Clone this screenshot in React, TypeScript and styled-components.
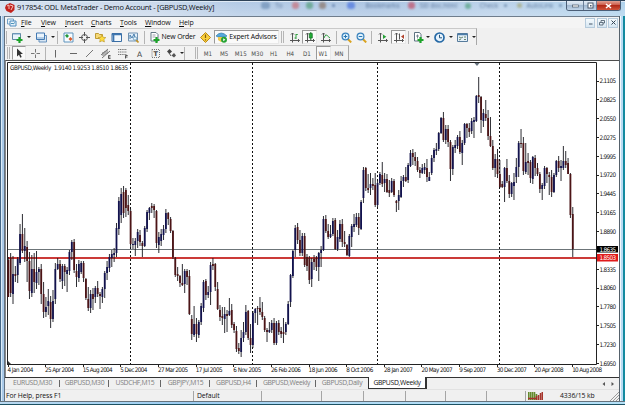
import React from 'react';
import styled, { createGlobalStyle, css } from 'styled-components';

const Global = createGlobalStyle`
  * { box-sizing: border-box; }
  html, body { margin: 0; padding: 0; overflow: hidden; }
`;

const ui = `'Open Sans', 'Noto Sans', sans-serif`;
const tahoma = `'DejaVu Sans Condensed', 'DejaVu Sans', sans-serif`;

const Win = styled.div`
  width: 625px;
  height: 405px;
  display: flex;
  flex-direction: column;
  padding: 0 6px 0 5px;
  font-family: ${ui};
  color: #111;
  background:
    linear-gradient(90deg, #456786 0 1px, #dcecf8 1px 2px, #a9c9e8 2px 4px, #617181 4px 5px, transparent 5px 619px, #55616b 619px 620px, #f2f8fc 620px 621px, #b9dbf3 621px 623px, #148aa0 623px 625px),
    linear-gradient(90deg, #c9daec 0, #bdd5ec 30%, #9fc6ea 60%, #a9cdea 100%);
`;

const TitleBar = styled.div`
  height: 16px;
  flex: none;
  display: flex;
  margin: 0 -6px 0 -5px;
  padding: 0 4px 0 5px;
  border-top: 1px solid #2e4358;
  box-shadow: inset 0 1px 0 #dfeaf5;
  background:
    linear-gradient(180deg, rgba(255,255,255,.1), rgba(255,255,255,.3)),
    linear-gradient(90deg, #cfdcec 0, #c3d4e9 25%, #aac4e2 38%, #a3bfe0 60%, #b2cce7 80%, #a6cdea 100%);
`;
const TitleText = styled.div`
  width: 200px;
  flex: none;
  margin-left: 2px;
  font-size: 7.4px;
  line-height: 13px;
  letter-spacing: -0.24px;
  white-space: nowrap;
  color: #0b0f16;
`;
const Glass = styled.div`
  flex: 1;
  min-width: 0;
  height: 12px;
  display: flex;
  align-items: flex-start;
  padding: 0 0 0 43px;
  font-size: 6.5px;
  line-height: 8px;
  color: #2c4a74;
  opacity: 0.65;
  filter: blur(1px);
  overflow: hidden;
  white-space: nowrap;
`;
const Slot = styled.div<{ $w: number }>`
  width: ${p => p.$w}px;
  height: 9px;
  flex: none;
  display: flex;
  align-items: center;
  justify-content: center;
`;
const Blob = styled.i<{ $c: string; $w?: number }>`
  width: ${p => p.$w ?? 7}px;
  height: ${p => Math.min(p.$w ?? 7, 7)}px;
  border-radius: 3px;
  background: ${p => p.$c};
`;
const Caption = styled.div`
  display: flex;
  flex: none;
  height: 10px;
  border: 1px solid #4b5f78;
  border-top: 0;
  border-radius: 0 0 3px 3px;
  overflow: hidden;
`;
const CapBtn = styled.div<{ $w: number; $close?: boolean }>`
  width: ${p => p.$w}px;
  display: flex;
  align-items: center;
  justify-content: center;
  border-right: ${p => (p.$close ? 0 : '1px solid #6b7f98')};
  background: ${p => p.$close
    ? 'linear-gradient(#e0a295, #cc5a48 45%, #b02a18 50%, #d0523a)'
    : 'linear-gradient(#e4edf6, #c3d4e6 45%, #a1b9d2 50%, #c0d4e8)'};
`;

const MenuBar = styled.div`
  height: 12px;
  flex: none;
  display: flex;
  align-items: center;
  background: #f4f4f4;
  border-top: 1px solid #6f7d8c;
  padding: 0 0 0 2px;
`;
const MenuItem = styled.div<{ $w: number }>`
  width: ${p => p.$w}px;
  font-size: 7px;
  line-height: 9px;
  letter-spacing: -0.15px;
  color: #111;
  &::first-letter { text-decoration: underline; text-decoration-thickness: 0.5px; }
`;
const Mdi = styled.div`
  display: flex;
  gap: 1.5px;
  margin-left: auto;
  padding-right: 1px;
`;
const MdiBtn = styled.div`
  width: 10px;
  height: 10px;
  display: flex;
  align-items: center;
  justify-content: center;
  background: linear-gradient(#f5fafd, #d6e6f2);
  border: 1px solid #b5cadb;
`;

const Bar = styled.div<{ $h: number }>`
  height: ${p => p.$h}px;
  flex: none;
  display: flex;
  background: #f0f0f0;
`;
const Strip = styled.div<{ $w: number }>`
  width: ${p => p.$w}px;
  display: flex;
  align-items: center;
  overflow: hidden;
  border-top: 1px solid #c9c9c9;
  border-right: 1px solid #a8a8a8;
  background: #f2f2f2;
`;
const Cell = styled.div<{ $w: number; $on?: boolean }>`
  width: ${p => p.$w}px;
  height: 14px;
  flex: none;
  display: flex;
  align-items: center;
  justify-content: center;
  ${p => p.$on && css`
    background: #fafafa;
    border: 1px solid;
    border-color: #9a9a9a #e8e8e8 #e8e8e8 #9a9a9a;
  `}
`;
const Sep = styled.div<{ $m?: number }>`
  width: 1px;
  height: 13px;
  flex: none;
  background: #b4b4b4;
  margin: 0 ${p => p.$m ?? 0}px;
`;
const Grip = styled.div`
  width: 3px;
  height: 12px;
  flex: none;
  margin: 0 2px;
  border-left: 1px solid #b5b5b5;
  border-right: 1px solid #b5b5b5;
`;
const Label = styled.span`
  font-size: 6.9px;
  line-height: 10px;
  margin-left: 2px;
  letter-spacing: -0.16px;
  white-space: nowrap;
  color: #080808;
`;
const Period = styled(Cell)`
  font-size: 6.2px;
  font-family: ${tahoma};
  color: #4a4a4a;
`;
const Caret = styled.i`
  border: 2px solid transparent;
  border-top: 2.5px solid #222;
  border-bottom: 0;
`;

const ChartArea = styled.div`
  height: 317px;
  flex: none;
  background: #fff;
  border-top: 1px solid #4e4e4e;
  border-left: 1px solid #8a8a8a;
`;
const TabRow = styled.div`
  height: 12px;
  flex: none;
  display: flex;
  background: #f0f0f0;
  border-top: 1px solid #333;
  font-size: 6.8px;
  line-height: 10px;
  color: #808080;
`;
const Tab = styled.div<{ $w: number; $active?: boolean }>`
  width: ${p => p.$w}px;
  flex: none;
  display: flex;
  justify-content: center;
  position: relative;
  white-space: nowrap;
  letter-spacing: -0.32px;
  ${p => p.$active ? css`
    margin-top: -1px;
    height: 12px;
    line-height: 12px;
    background: #fff;
    color: #111;
    border: 1px solid #333;
    border-top: 0;
    border-right-width: 2px;
  ` : css`
    &::after {
      content: '';
      position: absolute;
      right: 0;
      top: 2px;
      height: 7px;
      border-right: 1px solid #666;
    }
    &:nth-last-child(3)::after { border: 0; }
  `}
`;
const Arrows = styled.div`
  margin-left: auto;
  display: flex;
  align-items: center;
  padding-right: 4px;
`;
const Status = styled.div`
  height: 12px;
  flex: none;
  display: flex;
  align-items: center;
  background: #f0f0f0;
  border-top: 1px solid #e2e2e2;
  font-size: 6.8px;
  line-height: 10px;
  letter-spacing: -0.08px;
  color: #111;
`;
const Pane = styled.div<{ $w: number; $pad?: number; $last?: boolean }>`
  width: ${p => p.$w}px;
  height: 10px;
  padding-left: ${p => p.$pad ?? 1}px;
  display: flex;
  align-items: center;
  gap: 17px;
  white-space: nowrap;
  border-right: ${p => (p.$last ? 0 : '1px solid #a5a5a5')};
`;
const Foot = styled.div`
  flex: 1;
  margin: 0 -6px 0 -5px;
  border-top: 1px solid #66727c;
  border-bottom: 1px solid #1d5263;
  background: linear-gradient(90deg, #b9d8f0, #a6d3f2 20%, #9ccbf0 30%, #b1dbf5 50%, #b4e0f7);
`;

/* [high, body top, body bottom, low, direction] per week, vertical pixels; 1 = up, 0 = down */
type Candle = [number, number, number, number, number];
const candles: Candle[] = [
  [257,260,297,297,0],[253,258,293,297,0],[256,274,294,304,1],[266,274,276,282,0],[257,259,275,283,1],[224,234,263,265,1],
  [214,234,251,253,0],[228,246,251,262,1],[241,247,261,282,0],[252,261,291,299,0],[255,269,293,297,1],[253,269,282,293,0],
  [251,272,283,289,1],[267,269,272,285,1],[264,269,294,304,0],[282,294,312,318,0],[297,307,312,317,1],[289,301,306,315,1],
  [296,302,319,328,0],[290,301,319,322,1],[263,269,299,304,1],[258,264,269,270,1],[260,264,279,282,0],[264,266,281,289,1],
  [264,266,272,286,0],[267,270,274,292,1],[250,252,271,275,1],[240,242,252,260,1],[239,242,270,273,0],[264,271,277,287,0],
  [260,264,278,282,1],[261,263,272,274,1],[261,263,278,282,0],[278,279,298,300,0],[287,299,308,311,0],[290,294,308,313,1],
  [288,294,299,310,0],[286,288,297,303,1],[281,288,294,297,0],[292,294,296,309,0],[287,289,297,303,1],[271,273,289,298,1],
  [261,267,273,280,1],[254,257,268,272,1],[250,254,258,267,1],[248,253,255,262,1],[223,228,253,257,1],[197,201,229,235,1],
  [188,194,215,223,1],[186,192,213,218,0],[188,190,208,217,0],[195,205,211,215,0],[209,211,244,249,0],[238,244,245,249,1],
  [238,241,245,256,1],[229,232,241,248,1],[230,235,242,246,0],[241,243,246,257,0],[226,228,246,247,1],[210,212,229,232,1],
  [207,208,213,220,1],[203,206,208,213,0],[204,206,210,218,0],[210,211,243,248,0],[232,237,245,253,1],[229,234,241,246,1],
  [225,229,235,240,1],[209,213,229,233,1],[212,213,219,225,0],[217,219,231,233,0],[230,231,257,259,0],[257,258,275,277,0],
  [267,274,276,281,0],[275,276,283,287,0],[264,283,285,286,0],[269,271,284,293,1],[269,271,277,285,0],[270,276,314,315,0],
  [315,319,334,340,0],[306,324,335,337,1],[318,324,334,342,0],[320,322,335,338,1],[303,306,322,325,1],[280,282,308,312,1],
  [279,281,295,300,0],[286,292,295,298,1],[262,265,292,305,1],[258,264,266,270,0],[263,264,287,291,0],[282,289,309,310,0],
  [305,310,317,321,0],[307,316,318,325,0],[307,314,319,333,1],[310,314,316,332,0],[298,311,315,316,1],[304,310,325,328,0],
  [322,324,330,333,0],[326,331,349,352,0],[343,348,351,354,0],[330,338,352,357,1],[322,332,338,342,1],[305,312,332,335,1],
  [310,311,338,340,0],[324,338,345,353,0],[311,313,345,348,1],[308,309,313,323,1],[306,308,309,325,0],[297,308,312,315,0],
  [302,312,317,320,0],[316,318,330,332,0],[328,330,332,342,0],[322,330,332,333,1],[320,323,330,333,1],[318,323,343,345,0],
  [321,323,343,345,1],[320,323,332,335,0],[327,331,334,338,0],[318,332,334,343,0],[322,324,332,335,1],[301,304,324,325,1],
  [274,275,302,307,1],[250,251,276,278,1],[225,228,250,257,1],[223,227,240,244,0],[230,240,253,256,0],[233,236,253,256,1],
  [233,236,265,267,0],[254,257,266,271,0],[256,258,280,284,0],[258,262,279,287,1],[255,259,262,270,0],[256,258,267,271,0],
  [252,253,267,281,1],[246,250,253,267,1],[216,219,250,251,1],[215,219,231,233,0],[224,231,237,239,0],[225,234,237,238,1],
  [218,221,234,236,1],[218,220,249,250,0],[230,237,249,251,1],[220,224,239,242,1],[219,224,242,247,0],[231,242,244,247,0],
  [244,245,255,256,0],[234,236,256,257,1],[224,226,237,247,1],[214,224,227,232,1],[213,217,225,227,1],[213,217,228,235,0],
  [200,202,229,230,1],[167,170,198,203,1],[167,168,188,191,0],[174,188,190,193,0],[173,184,188,195,1],[178,184,186,190,0],
  [173,185,205,207,0],[180,183,205,207,1],[172,174,183,185,1],[162,175,184,187,0],[173,179,183,192,1],[174,179,192,193,0],
  [180,190,193,197,0],[178,181,192,193,1],[179,181,195,197,0],[200,201,203,212,0],[190,195,201,210,1],[176,181,197,198,1],
  [175,177,181,187,1],[167,177,181,182,0],[163,165,180,183,1],[150,153,166,167,1],[149,153,157,165,0],[152,157,161,166,0],
  [157,161,170,172,0],[167,170,173,178,0],[164,168,173,174,1],[163,167,170,174,1],[159,168,177,182,0],[172,177,181,181,1],
  [155,158,173,175,1],[148,150,158,162,1],[143,149,151,155,1],[132,133,149,151,1],[117,118,133,134,1],[112,118,140,142,0],
  [125,129,140,144,1],[125,129,142,147,0],[140,142,169,181,0],[145,147,169,175,1],[140,145,148,153,1],[135,137,146,149,1],
  [131,137,152,154,0],[140,143,153,165,1],[123,124,143,145,1],[123,124,128,138,0],[123,128,132,137,0],[118,121,131,134,1],
  [117,120,122,138,1],[95,96,121,122,1],[77,95,97,103,0],[96,97,120,133,0],[109,113,121,127,1],[100,114,118,121,0],
  [110,118,136,140,0],[117,136,146,147,0],[140,146,168,170,0],[154,159,168,177,1],[149,159,174,178,0],[160,174,187,188,0],
  [181,184,187,188,0],[167,168,187,202,1],[159,168,181,183,0],[175,181,194,198,0],[182,183,194,197,1],[173,182,186,200,1],
  [158,167,177,183,1],[141,143,167,177,1],[129,143,144,148,0],[137,143,171,175,0],[143,162,172,174,1],[153,161,163,175,0],
  [160,162,178,183,0],[156,157,179,184,1],[155,158,168,176,0],[163,168,174,176,0],[172,174,189,193,0],[183,185,189,200,1],
  [166,168,186,189,1],[167,168,174,183,0],[172,175,177,195,0],[170,177,192,197,0],[173,175,192,193,1],[160,161,175,177,1],
  [156,161,168,172,0],[160,166,168,181,1],[146,161,168,170,1],[151,161,165,168,0],[158,163,174,174,0],[173,174,215,218,0],
  [207,214,249,257,0],
];
const STEP = 2.352;

const prices = ['2.1105','2.0825','2.0550','2.0275','1.9995','1.9720','1.9445','1.9165','1.8890','','1.8335','1.8060','1.7780','1.7505','1.7230','1.6950'];
const dates: [string, number][] = [
  ['4 Jan 2004',27],['25 Apr 2004',30],['15 Aug 2004',31],['5 Dec 2004',28],['27 Mar 2005',31],['17 Jul 2005',28],['6 Nov 2005',29],
  ['26 Feb 2006',31],['18 Jun 2006',30],['8 Oct 2006',28],['28 Jan 2007',30],['20 May 2007',32],['9 Sep 2007',28],['30 Dec 2007',31],
  ['20 Apr 2008',30],['10 Aug 2008',31],
];

const ChartText = styled.text<{ $light?: boolean }>`
  font-family: ${tahoma};
  font-size: 6.3px;
  fill: ${p => (p.$light ? '#fff' : '#111')};
`;
const Plot = styled.svg`
  display: block;
`;

const Chart = () => (
  <Plot width="613" height="316" viewBox="6 61 613 316">
    <path d="M7.5 365V62.5H596.5V364.5H7" fill="none" stroke="#222" />
    <path d="M8 361l3 3h-3z" fill="#333" />
    <path d="M130.5 63V364M252.5 63V364M377.5 63V364M499.5 63V364" stroke="#111" strokeDasharray="2 2" />
    <path d="M8 249.5H596" stroke="#6c7478" />
    <path d="M8 258H596" stroke="#cb3a38" strokeWidth="1.8" />
    {candles.map(([h, t, b, l, up], i) => {
      const x = 8 + i * STEP;
      return (
        <g key={i}>
          <path d={`M${x + 0.3} ${h}V${l}`} stroke="#15151c" strokeWidth="0.9" />
          <rect x={x - 0.6} y={t} width="1.8" height={Math.max(1, b - t)} fill={up ? '#12124e' : '#4c1416'} />
        </g>
      );
    })}
    <path d="M474.5 63h5l-2.5 3z" fill="#63707c" />
    <ChartText x="10" y="69.6" textLength="118">GBPUSD,Weekly{'\u00a0\u00a0'}1.9140 1.9253 1.8510 1.8635</ChartText>
    {prices.map((p, i) => p && (
      <g key={p}>
        <path d={`M597 ${Math.round(80.5 + i * 18.83) + 0.5}h2`} stroke="#222" />
        <ChartText x="599.5" y={83.2 + i * 18.83} textLength="16.5">{p}</ChartText>
      </g>
    ))}
    <rect x="597" y="246" width="21" height="6.5" fill="#000" />
    <ChartText $light x="599.5" y="251.6" textLength="16.5">1.8635</ChartText>
    <rect x="597" y="254" width="21" height="7.5" fill="#e01a1a" />
    <ChartText $light x="599.5" y="260.2" textLength="16.5">1.8503</ChartText>
    {dates.map(([d, w], i) => (
      <g key={d}>
        <path d={`M${Math.round(7.5 + i * 37.63) + 0.5} 365v2`} stroke="#222" />
        <ChartText x={7.4 + i * 37.65} y="372.2" textLength={w - 1}>{d}</ChartText>
      </g>
    ))}
  </Plot>
);

type IconKind =
  | 'newchart' | 'profiles' | 'market' | 'cross' | 'nav' | 'terminal' | 'tester' | 'order' | 'meta' | 'expert'
  | 'bars' | 'candle' | 'line' | 'zin' | 'zout' | 'scroll' | 'shift' | 'indic' | 'clock' | 'template'
  | 'cursor' | 'plus' | 'vline' | 'hline' | 'trend' | 'channel' | 'fib' | 'a' | 't' | 'arrows';

const axes = <path d="M3.5 1v9.500M1 8.500h9.500M2 2.500l1.500-1.500 1.500 1.500M9 7l1.500 1.500L9 10" stroke="#555" fill="none" />;
const greenPlus = <path d="M7.500 5v6M4.500 8h6" stroke="#1da32a" strokeWidth="2.200" />;
const lens = <>
  <path d="M6.800 7l3.400 3.400" stroke="#d9a21f" strokeWidth="2" />
  <circle cx="4.500" cy="4.500" r="3.400" fill="#dff1fc" stroke="#3b83bd" strokeWidth="1.200" />
</>;

const art: Record<IconKind, React.ReactNode> = {
  newchart: <><path d="M.5 1.500h8v6h-8z" fill="#e9f3fb" stroke="#6188a4" /><path d="M1 2h7" stroke="#7aa6cc" />{greenPlus}</>,
  profiles: <><path d="M3 3.500h7.500V10H3z" fill="#d8e6f3" stroke="#6992bd" /><path d="M.5 1h8v6.500h-8z" fill="#eaf4fc" stroke="#4379b3" /><path d="M1 6h7" stroke="#7ba5cf" /></>,
  market: <><path d="M1 1h9v9H1z" fill="#f7fcff" stroke="#5d93bd" /><path d="M2 3.500l2-1.500 2 2-2 2z" fill="#24983a" /><path d="M5.500 7l2-2 2 2-2 2z" fill="#da5b2a" /></>,
  cross: <><circle cx="5.500" cy="5.500" r="3" fill="none" stroke="#555" /><path d="M5.500 0v4M5.500 7v4M0 5.500h4M7 5.500h4" stroke="#555" /></>,
  nav: <><path d="M.5 1.500h3l1 1h3v4h-7z" fill="#f5d877" stroke="#bd9b35" /><path d="M7 3l1.200 2.300 2.600.3-1.900 1.800.5 2.600L7 8.800 4.700 10l.5-2.600-2-1.800 2.700-.3z" fill="#ffdc3f" stroke="#b39120" strokeWidth=".6" /></>,
  terminal: <><path d="M1 1.500h9.500v8H1z" fill="#f2f8fd" stroke="#3a6ea5" /><path d="M1 2.500h9.500M2.500 3v6" stroke="#3e76b0" strokeWidth="1.700" /></>,
  tester: <><path d="M.5 1h9v8h-9z" fill="#e2effa" stroke="#7293b2" /><path d="M2 7V3l2 3 2-4 1 4" stroke="#487eae" fill="none" /><path d="M8 8l2.500 2.500" stroke="#c49428" strokeWidth="1.600" /><circle cx="7" cy="6.500" r="1.700" fill="#e8f6fd" stroke="#4a82aa" strokeWidth=".7" /></>,
  order: <><path d="M2 .5h5l2 2V9H2z" fill="#fff" stroke="#657884" /><path d="M3.500 3h3M3.500 5h3" stroke="#778" strokeWidth=".7" />{greenPlus}</>,
  meta: <><path d="M5.500.5l5 5-5 5-5-5z" fill="#f8cf3d" stroke="#bd8a17" /><path d="M5.500 2.500v3.500M5.500 7.300v1.200" stroke="#855d0d" strokeWidth="1.200" /></>,
  expert: <><path d="M0 4Q5-2 11 4L9 5H2z" fill="#57a9dc" stroke="#367ba8" strokeWidth=".7" /><path d="M2 5h7v2L5 10 2 8z" fill="#f0c84e" /><circle cx="8" cy="7.800" r="3" fill="#27a334" /><path d="M7.200 6.300l2.200 1.500-2.200 1.500z" fill="#fff" /></>,
  bars: <>{axes}<path d="M7 2v5M5.500 6H7M7 2.500h1.800" stroke="#30a040" fill="none" /></>,
  candle: <>{axes}<path d="M6.800 0v8" stroke="#187a28" /><path d="M5.300 1.500h3v4.500h-3z" fill="#1fae35" stroke="#176e25" strokeWidth=".7" /></>,
  line: <>{axes}<path d="M4 6Q6 1 7.500 4L10 6" stroke="#35a047" fill="none" /></>,
  zin: <>{lens}<path d="M2.700 4.500h3.600M4.500 2.700v3.600" stroke="#2877b3" /></>,
  zout: <>{lens}<path d="M2.700 4.500h3.600" stroke="#2877b3" /></>,
  scroll: <>{axes}<path d="M6 2.500l3.300 2.300L6 7z" fill="#25a036" /></>,
  shift: <>{axes}<path d="M6.500 1.500v6" stroke="#555" /><path d="M11 2.500L8 4.600 11 7z" fill="#b2432d" /></>,
  indic: <><path d="M1.500.5h5l1.500 2V9H1.500z" fill="#fff" stroke="#5c7280" /><path d="M4.500 2.500v4M3 4h3" stroke="#567" strokeWidth=".7" />{greenPlus}</>,
  clock: <><circle cx="5.500" cy="5.500" r="4.500" fill="#e7f3fd" stroke="#2468a5" strokeWidth="1.700" /><path d="M5.500 2.800v3H8" stroke="#245781" fill="none" /></>,
  template: <><path d="M.5 1.500h10v8H.5z" fill="#e6f1f9" stroke="#567b9c" /><path d="M1 2.500h9" stroke="#4b7ca8" strokeWidth="1.500" /><path d="M2 5l2 1 2-1M2 8l2-1M7 5h2M7 7.500h2" stroke="#69866f" fill="none" /></>,
  cursor: <path d="M3 .5v8l2-1.800 1.300 3 1.400-.7L6.400 6H9z" fill="#333" />,
  plus: <path d="M5.500 1v3.500M5.500 6.500V10M1 5.500h3.500M6.500 5.500H10" stroke="#777" />,
  vline: <path d="M5.500 2v7.500" stroke="#666" />,
  hline: <path d="M2 5.500h7" stroke="#666" />,
  trend: <path d="M2 9l7-7" stroke="#777" />,
  channel: <><path d="M1 7l7-6M2 10l8-7M3 4v4M5 3v4M7 2v4" stroke="#666" strokeWidth=".9" /><path d="M10.500 7.500H8.500v3h2M8.500 9h2" stroke="#333" strokeWidth=".8" fill="none" /></>,
  fib: <><path d="M1 1.500h9M1 4h9M1 6.500h9" stroke="#777" strokeDasharray="1.200 .6" /><path d="M8.500 10.500v-3h2.200M8.500 9h2" stroke="#333" strokeWidth=".8" fill="none" /></>,
  a: <text x="5.500" y="8.600" textAnchor="middle" fontFamily="DejaVu Sans" fontSize="7.500" fill="#444">A</text>,
  t: <><rect x="2" y="1.500" width="7.500" height="8" fill="none" stroke="#777" strokeDasharray="1 1" /><text x="5.700" y="8" textAnchor="middle" fontFamily="DejaVu Sans" fontSize="6.500" fontWeight="700" fill="#444">T</text></>,
  arrows: <><path d="M1 3.500L3.500 1 6 3.500 3.500 6z" fill="#444" /><path d="M5.500 7.500L8 5l2 2.500L8 9.500z" fill="#555" /><path d="M3 5l2 3" stroke="#555" /></>,
};

const Icon = ({ k }: { k: IconKind }) => <svg width="11" height="11" viewBox="0 0 11 11">{art[k]}</svg>;
const Tool = ({ k, w, on }: { k: IconKind; w: number; on?: boolean }) => <Cell $w={w} $on={on}><Icon k={k} /></Cell>;
const Drop = ({ w = 6 }: { w?: number }) => <Cell $w={w}><Caret /></Cell>;

const periods: [string, number][] = [['M1', 16], ['M5', 16.5], ['M15', 16.5], ['M30', 16.5], ['H1', 16.5], ['H4', 16.5], ['D1', 17], ['W1', 15], ['MN', 17]];
const menus: [string, number][] = [['File', 20], ['View', 24], ['Insert', 26], ['Charts', 29], ['Tools', 25], ['Window', 34], ['Help', 20]];
const tabs: [string, number][] = [['EURUSD,M30', 55], ['GBPUSD,M30', 49], ['USDCHF,M15', 52], ['GBPJPY,M15', 49], ['GBPUSD,H4', 47], ['GBPUSD,Weekly', 59], ['GBPUSD,Daily', 52]];

export default function App() {
  return (
    <Win>
      <Global />
      <TitleBar>
        <svg width="10" height="14" viewBox="0 0 10 14">
          <path d="M1 4l4-2 4.500 2v5L6 12 1.500 10 0 7z" fill="#c3221c" />
          <path d="M2 5l2-1v4M5 4l3 1-2 4" stroke="#f5c4bc" fill="none" />
        </svg>
        <TitleText>917854: ODL MetaTrader - Demo Account - [GBPUSD,Weekly]</TitleText>
        <Glass>
          <Slot $w={10}><Blob $c="#688bb2" $w={9} /></Slot>
          <Slot $w={18}>To</Slot>
          <Slot $w={14}><Blob $c="#cb6870" /></Slot>
          <Slot $w={14}><Blob $c="#4e9b74" /></Slot>
          <Slot $w={13}><Blob $c="#876e5d" /></Slot>
          <Slot $w={9}><Blob $c="#3d5e90" $w={3} /></Slot>
          <Slot $w={25}><Blob $c="#426ee0" $w={8} /></Slot>
          <Slot $w={39}>Bookmarks</Slot>
          <Slot $w={18}><Blob $c="#c4445c" /></Slot>
          <Slot $w={37}>SEI doc.html</Slot>
          <Slot $w={22}><Blob $c="#4b9d78" $w={6} /></Slot>
          <Slot $w={20}>Check</Slot>
          <Slot $w={13}><Blob $c="#4d6d93" $w={3} /></Slot>
          <Slot $w={14}><Blob $c="#a5a570" $w={5} /></Slot>
          <Slot $w={28}>AutoLink</Slot>
          <Slot $w={12}><Blob $c="#4d6d93" $w={3} /></Slot>
        </Glass>
        <Caption>
          <CapBtn $w={17}><svg width="7" height="4"><rect x=".5" y="1" width="6" height="2" fill="#fff" stroke="#4c5a69" strokeWidth=".7" /></svg></CapBtn>
          <CapBtn $w={13}><svg width="7" height="7"><rect x="1" y="1" width="5" height="5" fill="#fff" stroke="#48596c" /><rect x="3" y="3" width="1.5" height="1.5" fill="#48596c" /></svg></CapBtn>
          <CapBtn $w={23} $close><svg width="7" height="6"><path d="M1 1l5 4M6 1L1 5" stroke="#fff" strokeWidth="1.6" /></svg></CapBtn>
        </Caption>
      </TitleBar>

      <MenuBar>
        <svg width="14" height="9" viewBox="0 0 14 9">
          <path d="M.5 1h6v5h-6z" fill="#eaf4fb" stroke="#6fa1c8" />
          <path d="M3 3h6v5H3z" fill="#eaf4fb" stroke="#4c8bbd" />
          <path d="M4 6l1-1 1 1 2-1.500" stroke="#4990b8" fill="none" />
        </svg>
        {menus.map(([m, w]) => <MenuItem key={m} $w={w}>{m}</MenuItem>)}
        <Mdi>
          <MdiBtn><svg width="5" height="5"><path d="M1 4h3.500" stroke="#456" /></svg></MdiBtn>
          <MdiBtn><svg width="6" height="6"><path d="M2 2V.5h3.500V3H4M.5 2.500H4V5H.5z" stroke="#456" fill="none" strokeWidth=".8" /></svg></MdiBtn>
          <MdiBtn><svg width="5" height="5"><path d="M.5.5l4 4M4.500.5l-4 4" stroke="#345" /></svg></MdiBtn>
        </Mdi>
      </MenuBar>

      <Bar $h={17}>
        <Strip $w={472}>
          <Sep $m={1} />
          <Tool k="newchart" w={18} /><Drop /><Tool k="profiles" w={18} /><Drop w={5} />
          <Sep $m={2} />
          <Tool k="market" w={16} /><Tool k="cross" w={16} /><Tool k="nav" w={16} /><Tool k="terminal" w={17} /><Tool k="tester" w={17} />
          <Sep $m={2} />
          <Cell $w={50}><Icon k="order" /><Label>New Order</Label></Cell>
          <Tool k="meta" w={17} />
          <Cell $w={65} $on><Icon k="expert" /><Label>Expert Advisors</Label></Cell>
          <Grip />
          <Tool k="bars" w={16} /><Tool k="candle" w={15} on /><Tool k="line" w={17} />
          <Sep $m={2} />
          <Tool k="zin" w={14} /><Tool k="zout" w={17} />
          <Sep $m={1} />
          <Tool k="scroll" w={18} /><Tool k="shift" w={15} on />
          <Sep $m={2} />
          <Tool k="indic" w={14} /><Drop /><Tool k="clock" w={17} /><Drop /><Tool k="template" w={16} /><Drop w={8} />
        </Strip>
      </Bar>
      <Bar $h={15}>
        <Strip $w={344}>
          <Grip />
          <Tool k="cursor" w={14} on /><Tool k="plus" w={19} />
          <Sep />
          <Tool k="vline" w={19} /><Tool k="hline" w={16} /><Tool k="trend" w={16} /><Tool k="channel" w={17} /><Tool k="fib" w={17} />
          <Tool k="a" w={16} /><Tool k="t" w={16} /><Tool k="arrows" w={16} /><Drop w={5} />
          <Sep />
          <Cell $w={8} /><Grip />
          {periods.map(([p, w]) => <Period key={p} $w={w} $on={p === 'W1'}>{p}</Period>)}
        </Strip>
      </Bar>

      <ChartArea><Chart /></ChartArea>

      <TabRow>
        {tabs.map(([t, w]) => <Tab key={t} $w={w}>{t}</Tab>)}
        <Tab $w={59} $active>GBPUSD,Weekly</Tab>
        <Arrows>
          <svg width="14" height="6"><path d="M4 1L1.500 3 4 5zM10.500 1L13 3l-2.500 2z" fill="#555" /></svg>
        </Arrows>
      </TabRow>
      <Status>
        <Pane $w={189}>For Help, press F1</Pane>
        <Pane $w={68} $pad={3}>Default</Pane>
        <Pane $w={60} /><Pane $w={42} /><Pane $w={42} /><Pane $w={40} /><Pane $w={41} /><Pane $w={39} />
        <Pane $w={83} $last $pad={2}>
          <svg width="15" height="8" viewBox="0 0 15 8">
            <path d="M.5 0v8M2.500 0v8M4.500 0v8M6.500 0v8M8.500 2v6" stroke="#648b2c" strokeWidth="1.600" />
            <path d="M0 6.500h8M8.500 4v4M10.500 3v5M12.500 1v7M14.300 0v8" stroke="#a5342b" strokeWidth="1.500" />
          </svg>
          <span>4336/15 kb</span>
        </Pane>
        <svg width="10" height="10"><path d="M1 10l9-9M4 10l6-6M7 10l3-3" stroke="#999" /></svg>
      </Status>
      <Foot />
    </Win>
  );
}
